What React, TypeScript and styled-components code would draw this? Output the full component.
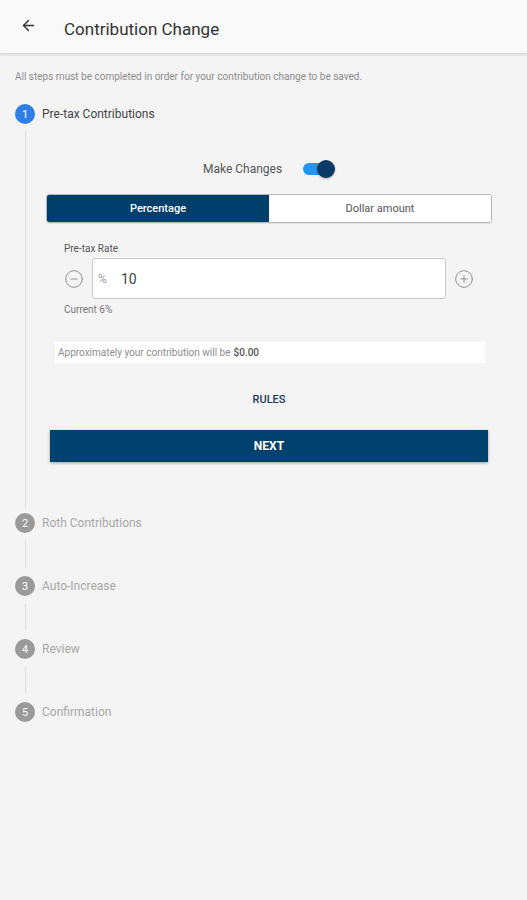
import React from 'react';
import styled, { createGlobalStyle } from 'styled-components';
import { ArrowLeft, CircleMinus, CirclePlus } from 'lucide-react';

const GlobalStyle = createGlobalStyle`
  html, body {
    margin: 0;
    padding: 0;
    background: #f4f4f4;
    font-family: Roboto, "Noto Sans", Arial, sans-serif;
  }
`;

const steps = ['Roth Contributions', 'Auto-Increase', 'Review', 'Confirmation'];

const App = () => {
  return (
    <Page>
      <GlobalStyle />
      <Header>
        <BackButton>
          <ArrowLeft size={17} strokeWidth={2} color="#333" />
        </BackButton>
        <Title>Contribution Change</Title>
      </Header>

      <Notice>All steps must be completed in order for your contribution change to be saved.</Notice>

      <Steps>
        <StepRow>
          <StepCircle $active>1</StepCircle>
          <StepLabel $active>Pre-tax Contributions</StepLabel>
        </StepRow>
        <StepBody>
          <ToggleRow>
            <ToggleText>Make Changes</ToggleText>
            <Toggle>
              <Thumb />
            </Toggle>
          </ToggleRow>

          <Segment>
            <SegmentButton $selected>Percentage</SegmentButton>
            <SegmentButton>Dollar amount</SegmentButton>
          </Segment>

          <RateBlock>
            <FieldLabel>Pre-tax Rate</FieldLabel>
            <InputRow>
              <IconButton>
                <CircleMinus size={20} strokeWidth={1.1} color="#8a8a8a" />
              </IconButton>
              <InputBox>
                <Unit>%</Unit>
                <Value>10</Value>
              </InputBox>
              <IconButton>
                <CirclePlus size={20} strokeWidth={1.1} color="#8a8a8a" />
              </IconButton>
            </InputRow>
            <Hint>Current 6%</Hint>
          </RateBlock>

          <Estimate>
            Approximately your contribution will be <strong>$0.00</strong>
          </Estimate>

          <RulesLink>RULES</RulesLink>

          <NextButton>NEXT</NextButton>
        </StepBody>

        {steps.map((label, i) => (
          <React.Fragment key={label}>
            <StepRow>
              <StepCircle>{i + 2}</StepCircle>
              <StepLabel>{label}</StepLabel>
            </StepRow>
            {i < steps.length - 1 && <StepBody $empty />}
          </React.Fragment>
        ))}
      </Steps>
    </Page>
  );
};

const Page = styled.div`
  min-height: 900px;
  background: #f4f4f4;
`;

const Header = styled.div`
  height: 53px;
  display: flex;
  align-items: center;
  background: #f9f9f9;
  border-bottom: 1px solid #dcdcdc;
  box-shadow: 0 1px 2px rgba(0, 0, 0, 0.12);
`;

const BackButton = styled.div`
  width: 64px;
  display: flex;
  align-items: center;
  padding-left: 20px;
  box-sizing: border-box;
  margin-top: -2px;
`;

const Title = styled.div`
  font-size: 17px;
  color: #333;
  margin-top: 5px;
`;

const Notice = styled.div`
  font-size: 10px;
  color: #8c8c8c;
  padding: 17px 15px 0;
`;

const Steps = styled.div`
  padding: 22px 35px 0 15px;
`;

const StepRow = styled.div`
  display: flex;
  align-items: center;
  height: 20px;
`;

const StepCircle = styled.div<{ $active?: boolean }>`
  width: 20px;
  height: 20px;
  border-radius: 50%;
  background: ${(p) => (p.$active ? '#2e7ee6' : '#9a9a9a')};
  color: #fff;
  font-size: 11px;
  display: flex;
  align-items: center;
  justify-content: center;
  flex-shrink: 0;
`;

const StepLabel = styled.div<{ $active?: boolean }>`
  margin-left: 7px;
  font-size: 12px;
  color: ${(p) => (p.$active ? '#444' : '#a8a8a8')};
`;

const StepBody = styled.div<{ $empty?: boolean }>`
  margin: ${(p) => (p.$empty ? '8px 0 8px 10px' : '6px 0 6px 10px')};
  border-left: 1px solid #dedede;
  padding-left: 20px;
  min-height: ${(p) => (p.$empty ? '27px' : '0')};
  padding-top: ${(p) => (p.$empty ? '0' : '28px')};
  padding-bottom: ${(p) => (p.$empty ? '0' : '45px')};
`;

const ToggleRow = styled.div`
  display: flex;
  align-items: center;
  justify-content: center;
  height: 22px;
  gap: 21px;
`;

const ToggleText = styled.span`
  font-size: 12px;
  color: #555;
`;

const Toggle = styled.div`
  position: relative;
  width: 30px;
  height: 12px;
  border-radius: 6px;
  background: #2196f3;
  margin-right: 2px;
`;

const Thumb = styled.div`
  position: absolute;
  right: -2px;
  top: -3px;
  width: 18px;
  height: 18px;
  border-radius: 50%;
  background: #0b3a66;
  box-shadow: 0 1px 2px rgba(0, 0, 0, 0.3);
`;

const Segment = styled.div`
  margin-top: 14px;
  display: grid;
  grid-template-columns: 1fr 1fr;
  height: 27px;
  border: 1px solid #b8b8b8;
  border-radius: 3px;
  overflow: hidden;
  box-shadow: 0 1px 1px rgba(0, 0, 0, 0.08);
`;

const SegmentButton = styled.div<{ $selected?: boolean }>`
  display: flex;
  align-items: center;
  justify-content: center;
  font-size: 11px;
  font-weight: ${(p) => (p.$selected ? 500 : 400)};
  color: ${(p) => (p.$selected ? '#fff' : '#555')};
  background: ${(p) => (p.$selected ? '#003f6c' : '#fff')};
`;

const RateBlock = styled.div`
  padding: 0 18px;
  margin-top: 20px;
`;

const FieldLabel = styled.div`
  font-size: 10px;
  color: #555;
  padding-bottom: 4px;
`;

const InputRow = styled.div`
  display: flex;
  align-items: center;
  gap: 8px;
`;

const IconButton = styled.div`
  width: 20px;
  height: 20px;
  display: flex;
  align-items: center;
  justify-content: center;
  flex-shrink: 0;
`;

const InputBox = styled.div`
  flex: 1;
  height: 41px;
  box-sizing: border-box;
  background: #fff;
  border: 1px solid #c9c9c9;
  border-radius: 3px;
  display: flex;
  align-items: center;
  padding-left: 5px;
`;

const Unit = styled.span`
  font-size: 12px;
  color: #a0a0a0;
  width: 23px;
`;

const Value = styled.span`
  font-size: 14px;
  color: #444;
`;

const Hint = styled.div`
  font-size: 10px;
  color: #777;
  margin-top: 5px;
`;

const Estimate = styled.div`
  margin: 27px 7px 0 9px;
  height: 21px;
  background: #fff;
  display: flex;
  align-items: center;
  padding-left: 3px;
  font-size: 10px;
  color: #8c8c8c;

  & > strong {
    font-weight: 500;
    color: #555;
    margin-left: 3px;
  }
`;

const RulesLink = styled.div`
  margin-top: 30px;
  text-align: center;
  font-size: 11px;
  font-weight: 500;
  color: #1d3a5e;
`;

const NextButton = styled.div`
  margin: 24px 4px 0;
  height: 32px;
  background: #00426e;
  color: #fff;
  font-size: 12px;
  font-weight: 700;
  display: flex;
  align-items: center;
  justify-content: center;
  box-shadow: 0 1px 3px rgba(0, 0, 0, 0.35);
`;

export default App;
